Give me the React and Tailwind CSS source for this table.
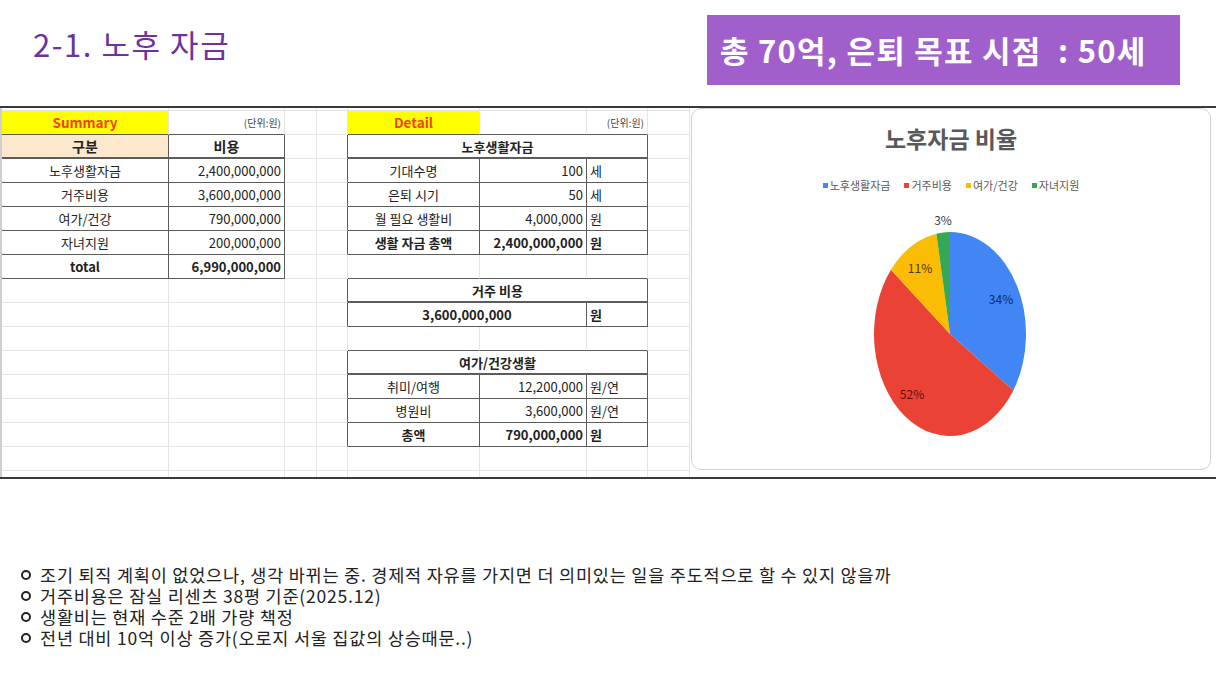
import React from "react";

const GRID_LIGHT_R = "border-r border-r-[#e4e4e4]";
const GRID_DARK_R = "border-r border-r-[#5c5c5c]";
const GRID_LIGHT_B = "border-b border-b-[#e4e4e4]";
const GRID_DARK_B = "border-b border-b-[#5c5c5c]";
const GRID_THICK_B = "border-b-2 border-b-[#5c5c5c]";
const SPAN = { 1: "", 2: "col-span-2", 3: "col-span-3" };

function isTable(r, c) {
  if (r >= 1 && r <= 6 && c >= 0 && c <= 1) return true;
  if (r >= 1 && r <= 5 && c >= 4 && c <= 6) return true;
  if (r >= 7 && r <= 8 && c >= 4 && c <= 6) return true;
  if (r >= 10 && r <= 13 && c >= 4 && c <= 6) return true;
  return false;
}

const L = (t, o = {}) => ({ t, a: "center", ...o });
const N = (t, o = {}) => ({ t, a: "right", ...o });
const U = (t, o = {}) => ({ t, a: "left", ...o });

const spec = {
  0: {
    0: { t: "Summary", a: "center", summary: true },
    1: { t: "(단위:원)", a: "right", small: true },
    4: { t: "Detail", a: "center", summary: true },
    6: { t: "(단위:원)", a: "right", small: true },
  },
  1: {
    0: L("구분", { bold: true, peach: true, thick: true, big: true }),
    1: L("비용", { bold: true, thick: true, big: true }),
    4: { ...L("노후생활자금", { bold: true, thick: true }), span: 3 },
  },
  2: {
    0: L("노후생활자금"),
    1: N("2,400,000,000"),
    4: L("기대수명"),
    5: N("100"),
    6: U("세"),
  },
  3: {
    0: L("거주비용"),
    1: N("3,600,000,000"),
    4: L("은퇴 시기"),
    5: N("50"),
    6: U("세"),
  },
  4: {
    0: L("여가/건강"),
    1: N("790,000,000"),
    4: L("월 필요 생활비"),
    5: N("4,000,000"),
    6: U("원"),
  },
  5: {
    0: L("자녀지원"),
    1: N("200,000,000"),
    4: L("생활 자금 총액", { bold: true }),
    5: N("2,400,000,000", { bold: true }),
    6: U("원", { bold: true }),
  },
  6: {
    0: L("total", { bold: true }),
    1: N("6,990,000,000", { bold: true }),
  },
  7: {
    4: { ...L("거주 비용", { bold: true, thick: true }), span: 3 },
  },
  8: {
    4: { ...L("3,600,000,000", { bold: true }), span: 2 },
    6: U("원", { bold: true }),
  },
  10: {
    4: { ...L("여가/건강생활", { bold: true, thick: true }), span: 3 },
  },
  11: {
    4: L("취미/여행"),
    5: N("12,200,000"),
    6: U("원/연"),
  },
  12: {
    4: L("병원비"),
    5: N("3,600,000"),
    6: U("원/연"),
  },
  13: {
    4: L("총액", { bold: true }),
    5: N("790,000,000", { bold: true }),
    6: U("원", { bold: true }),
  },
};

function buildCells() {
  const cells = [];
  for (let c = 0; c < 8; c++) {
    cells.push(
      <div key={`t${c}`} className={`${GRID_LIGHT_R} ${GRID_LIGHT_B}`} />
    );
  }
  for (let r = 0; r < 15; r++) {
    const row = spec[r] || {};
    let c = 0;
    while (c < 8) {
      const s = row[c];
      const span = s && s.span ? s.span : 1;
      const inT = isTable(r, c);
      const rightDark = inT || isTable(r, c + span);
      const bottomDark = inT || isTable(r + 1, c);
      const rCls = rightDark ? GRID_DARK_R : GRID_LIGHT_R;
      const bCls = s && s.thick ? GRID_THICK_B : bottomDark ? GRID_DARK_B : GRID_LIGHT_B;
      let bg = "";
      if (s && s.summary) bg = "bg-[#ffff00]";
      if (s && s.peach) bg = "bg-[#fce8cd]";
      const align =
        s && s.a === "right"
          ? "justify-end pr-[3px]"
          : s && s.a === "left"
          ? "justify-start pl-[3px]"
          : "justify-center";
      let txt = "text-[13px] text-[#222]";
      if (s && s.small) txt = "text-[10px] text-[#444]";
      if (s && s.big) txt = "text-[14px] text-[#222]";
      if (s && s.summary) txt = "text-[13.5px] text-[#f2421b]";
      const weight = s && (s.bold || s.summary) ? "font-bold" : "font-normal";
      cells.push(
        <div
          key={`${r}-${c}`}
          className={`flex items-center whitespace-nowrap overflow-hidden leading-none ${SPAN[span]} ${rCls} ${bCls} ${bg} ${align} ${txt} ${weight}`}
        >
          {s ? s.t : null}
        </div>
      );
      c += span;
    }
  }
  for (let c = 0; c < 8; c++) {
    cells.push(<div key={`b${c}`} className={`${GRID_LIGHT_R}`} />);
  }
  return cells;
}

const pieData = [
  { name: "노후생활자금", v: 2400, c: "#4285f4" },
  { name: "거주비용", v: 3600, c: "#ea4335" },
  { name: "여가/건강", v: 790, c: "#fbbc04" },
  { name: "자녀지원", v: 200, c: "#34a853" },
];

function Pie() {
  const cx = 258,
    cy = 128,
    rx = 76,
    ry = 102;
  const total = pieData.reduce((a, d) => a + d.v, 0);
  let acc = 0;
  const pt = (f) => {
    const th = f * Math.PI * 2;
    return [cx + rx * Math.sin(th), cy - ry * Math.cos(th)];
  };
  const paths = pieData.map((d, i) => {
    const f0 = acc / total;
    acc += d.v;
    const f1 = acc / total;
    const [x0, y0] = pt(f0);
    const [x1, y1] = pt(f1);
    const large = f1 - f0 > 0.5 ? 1 : 0;
    return (
      <path
        key={i}
        d={`M${cx},${cy} L${x0.toFixed(2)},${y0.toFixed(2)} A${rx},${ry} 0 ${large} 1 ${x1.toFixed(2)},${y1.toFixed(2)} Z`}
        fill={d.c}
      />
    );
  });
  return (
    <svg width="518" height="258" viewBox="0 0 518 258" className="block">
      {paths}
      <g
        fontFamily="'Noto Sans CJK KR', sans-serif"
        fontSize="12"
        textAnchor="middle"
        dominantBaseline="central"
      >
        <text x="251" y="13" fill="#404040">3%</text>
        <text x="228" y="61" fill="#4a3a00">11%</text>
        <text x="309" y="92" fill="#13295a">34%</text>
        <text x="220" y="187" fill="#5a140c">52%</text>
      </g>
    </svg>
  );
}

export default function App() {
  return (
    <div className="w-[1216px] h-[684px] bg-white overflow-hidden font-['Noto_Sans_CJK_KR',sans-serif]">
      {/* header */}
      <div className="h-[106px] flex items-start justify-between">
        <div className="pl-[33px] pt-[24px] text-[31px] leading-[40px] font-normal tracking-[0.05em] text-[#7030a0]">
          2-1. 노후 자금
        </div>
        <div className="mt-[15px] mr-[36px] w-[473px] h-[70px] bg-[#a15fcc] flex items-center pl-[13px] text-white font-bold text-[31px] whitespace-pre tracking-[0.04em]">
          총 70억, 은퇴 목표 시점  : 50세
        </div>
      </div>

      {/* sheet */}
      <div className="flex border-t-2 border-b-2 border-[#3a3a3a]">
        <div className="grid grid-cols-[167px_116px_32px_31px_132px_107px_61px_42px] grid-rows-[3px_repeat(15,24px)_6px] border-l-2 border-l-[#cfcfcf]">
          {buildCells()}
        </div>
        <div className="flex-1 flex items-start">
          <div className="ml-[1px] w-[520px] h-[362px] rounded-[10px] border border-[#d2d2d2] bg-white flex flex-col items-center">
            <div className="mt-[13px] h-[32px] leading-[32px] text-[23px] font-bold text-[#595959]">
              노후자금 비율
            </div>
            <div className="mt-[23px] h-[16px] flex items-center gap-[14px] text-[11px] text-[#595959] leading-none">
              {pieData.map((d) => (
                <div key={d.name} className="flex items-center gap-[2px]">
                  <span
                    className="w-[5px] h-[5px] inline-block"
                    style={{ backgroundColor: d.c }}
                  />
                  <span>{d.name}</span>
                </div>
              ))}
            </div>
            <div className="mt-[13px] self-start">
              <Pie />
            </div>
          </div>
        </div>
      </div>

      {/* bullets */}
      <ul className="mt-[85px] text-[17.5px] text-[#222] tracking-[0.045em]">
        {[
          "조기 퇴직 계획이 없었으나, 생각 바뀌는 중. 경제적 자유를 가지면 더 의미있는 일을 주도적으로 할 수 있지 않을까",
          "거주비용은 잠실 리센츠 38평 기준(2025.12)",
          "생활비는 현재 수준 2배 가량 책정",
          "전년 대비 10억 이상 증가(오로지 서울 집값의 상승때문..)",
        ].map((t) => (
          <li key={t} className="flex items-center h-[21px] leading-[21px] whitespace-nowrap">
            <span className="ml-[21px] mr-[9px] w-[10px] h-[10px] rounded-full border-2 border-[#222] shrink-0" />
            <span>{t}</span>
          </li>
        ))}
      </ul>
    </div>
  );
}
